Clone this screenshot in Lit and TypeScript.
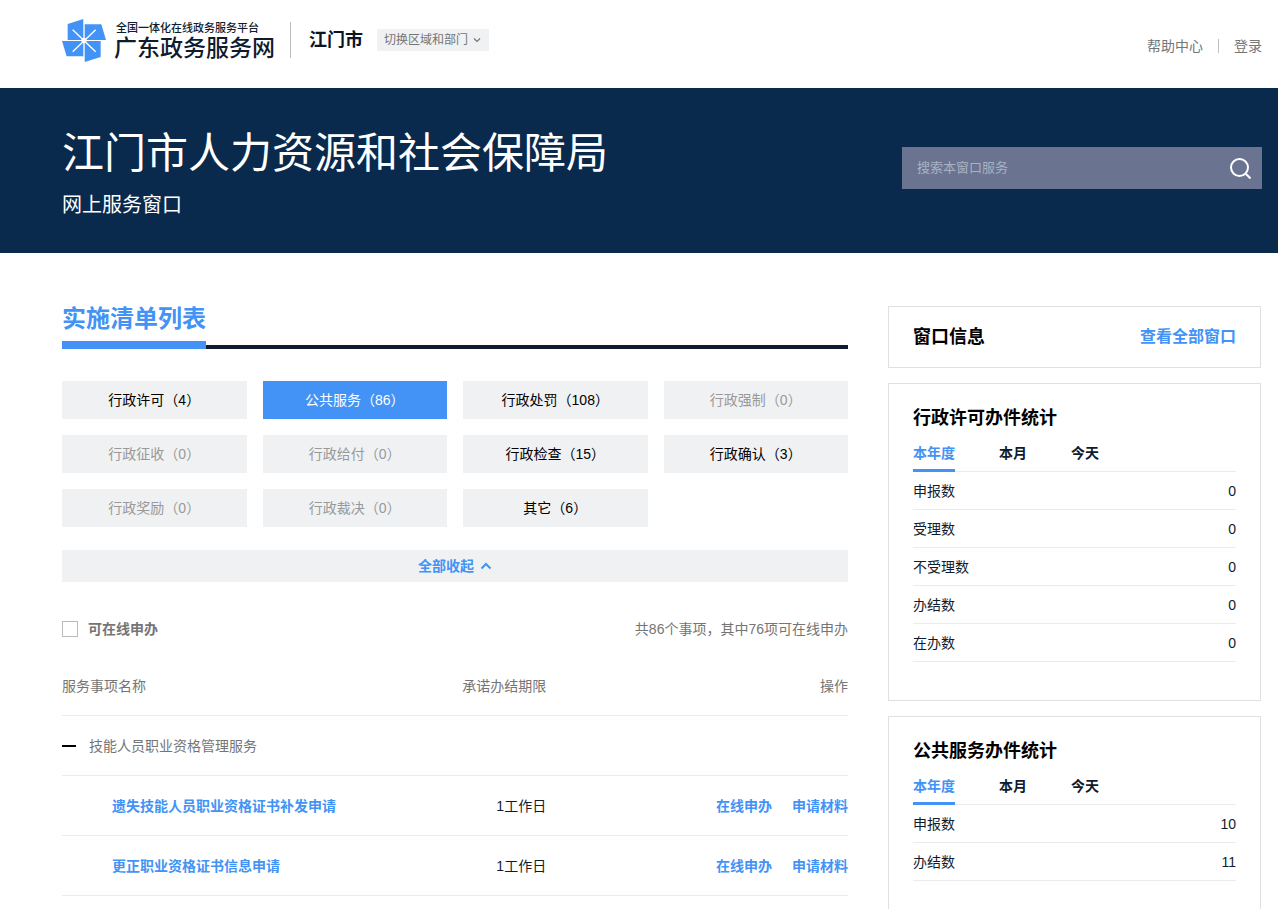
import { LitElement, html, css } from "lit";
import { customElement, property, state } from "lit/decorators.js";
import { classMap } from "lit/directives/class-map.js";

interface Category {
  name: string;
  count: number;
}

interface Service {
  name: string;
  limit: string;
}

interface Stat {
  label: string;
  value: number;
}

const CATEGORIES: Category[] = [
  { name: "行政许可", count: 4 },
  { name: "公共服务", count: 86 },
  { name: "行政处罚", count: 108 },
  { name: "行政强制", count: 0 },
  { name: "行政征收", count: 0 },
  { name: "行政给付", count: 0 },
  { name: "行政检查", count: 15 },
  { name: "行政确认", count: 3 },
  { name: "行政奖励", count: 0 },
  { name: "行政裁决", count: 0 },
  { name: "其它", count: 6 },
];

const SERVICES: Service[] = [
  { name: "遗失技能人员职业资格证书补发申请", limit: "1工作日" },
  { name: "更正职业资格证书信息申请", limit: "1工作日" },
];

const PERMIT_STATS: Stat[] = [
  { label: "申报数", value: 0 },
  { label: "受理数", value: 0 },
  { label: "不受理数", value: 0 },
  { label: "办结数", value: 0 },
  { label: "在办数", value: 0 },
];

const PUBLIC_STATS: Stat[] = [
  { label: "申报数", value: 10 },
  { label: "办结数", value: 11 },
];

const base = css`
  *,
  *::before,
  *::after {
    box-sizing: border-box;
  }
  h1,
  h2,
  h3,
  p {
    margin: 0;
  }
  a {
    color: inherit;
    text-decoration: none;
  }
  button {
    margin: 0;
    padding: 0;
    border: 0;
    background: none;
    color: inherit;
    font: inherit;
    cursor: pointer;
  }
  svg {
    display: block;
    flex: none;
  }
  table {
    width: 100%;
    border-collapse: separate;
    border-spacing: 0;
  }
`;

@customElement("site-header")
export class SiteHeader extends LitElement {
  static styles = [
    base,
    css`
      :host {
        display: flex;
        justify-content: space-between;
        align-items: flex-start;
        padding: 0 16px 8px 62px;
      }
      .left {
        display: flex;
        align-items: center;
        height: 80px;
      }
      .brand {
        display: flex;
        align-items: center;
        gap: 8px;
        color: #0f1c2e;
        font-weight: 500;
        white-space: nowrap;
      }
      .words {
        display: flex;
        flex-direction: column;
      }
      .platform {
        padding-left: 2px;
        font-size: 11px;
        line-height: 16px;
      }
      .site {
        font-size: 23px;
        line-height: 24px;
      }
      .city {
        margin-left: 15px;
        padding-left: 18px;
        border-left: 1px solid #b9bbbf;
        color: #0a1422;
        font-size: 18px;
        font-weight: 700;
        line-height: 36px;
      }
      .switch {
        display: flex;
        align-items: center;
        gap: 5px;
        height: 22px;
        margin-left: 14px;
        padding: 0 8px 0 7px;
        border-radius: 1px;
        background: #f0f1f3;
        color: #757575;
        font-size: 12px;
      }
      .right {
        display: flex;
        align-items: center;
        gap: 15px;
        padding-top: 35px;
        color: #757575;
        line-height: 22px;
      }
      .bar {
        width: 1px;
        height: 14px;
        background: #c0c0c0;
      }
    `,
  ];

  render() {
    return html`
      <div class="left">
        <a class="brand" href="#">
          <svg width="44" height="43" viewBox="18 24 132 129" aria-hidden="true">
            <g fill="#4293f5">
              <path d="M35 39 82 24V87H35Z" />
              <path d="M86 40H136L150 87H86Z" />
              <path d="M18 90H82V136H32Z" />
              <path d="M86 90H134V138L86 153Z" />
            </g>
            <path d="M50 56 119 122M119 56 50 122" stroke="#fff" stroke-width="4" />
            <circle cx="84" cy="88" r="8" fill="#fff" />
          </svg>
          <span class="words">
            <span class="platform">全国一体化在线政务服务平台</span>
            <span class="site">广东政务服务网</span>
          </span>
        </a>
        <span class="city">江门市</span>
        <button class="switch" aria-haspopup="true">
          切换区域和部门
          <svg width="8" height="8" viewBox="0 0 8 8" fill="none" stroke="#757575" stroke-width="1.200" aria-hidden="true">
            <path d="M1 2.500 4 5.500 7 2.500" />
          </svg>
        </button>
      </div>
      <nav class="right">
        <a href="#">帮助中心</a>
        <span class="bar"></span>
        <a href="#">登录</a>
      </nav>
    `;
  }
}

@customElement("dept-banner")
export class DeptBanner extends LitElement {
  static styles = [
    base,
    css`
      :host {
        display: flex;
        justify-content: space-between;
        align-items: flex-start;
        gap: 40px;
        padding: 36px 16px 31px 62px;
        background: #092a4d;
        color: #fff;
      }
      h1 {
        font-size: 42px;
        font-weight: 400;
        line-height: 60px;
      }
      p {
        padding-top: 4px;
        font-size: 20px;
        line-height: 34px;
      }
      .search {
        display: flex;
        width: 360px;
        height: 42px;
        margin-top: 23px;
        background: #6a7490;
      }
      input {
        flex: 1;
        min-width: 0;
        padding: 0 0 0 15px;
        border: 0;
        outline: 0;
        background: none;
        color: #fff;
        font: inherit;
        font-size: 13px;
      }
      input::placeholder {
        color: #a9b1c2;
        opacity: 1;
      }
      .go {
        display: grid;
        place-items: center;
        width: 44px;
      }
    `,
  ];

  render() {
    return html`
      <div>
        <h1>江门市人力资源和社会保障局</h1>
        <p>网上服务窗口</p>
      </div>
      <form class="search" role="search" @submit=${(e: Event) => e.preventDefault()}>
        <input type="text" aria-label="搜索本窗口服务" placeholder="搜索本窗口服务" />
        <button class="go" aria-label="搜索">
          <svg width="22" height="22" viewBox="0 0 22 22" fill="none" stroke="#fff" stroke-width="2" aria-hidden="true">
            <circle cx="10.500" cy="10.500" r="8.500" />
            <path d="M16.500 16.500 21.500 21.500" />
          </svg>
        </button>
      </form>
    `;
  }
}

@customElement("service-list")
export class ServiceList extends LitElement {
  @state() private active = 1;

  static styles = [
    base,
    css`
      :host {
        display: block;
        min-width: 0;
      }
      .heading {
        display: flex;
        border-bottom: 4px solid #0f1c2e;
      }
      h2 {
        margin-bottom: -4px;
        padding-bottom: 3px;
        border-bottom: 8px solid #4293f5;
        color: #4293f5;
        font-size: 24px;
        line-height: 38px;
      }
      .tiles {
        display: grid;
        grid-template-columns: repeat(4, minmax(0, 1fr));
        gap: 16px;
        margin-top: 32px;
      }
      .tile {
        height: 38px;
        background: #f0f1f3;
        color: #000;
      }
      .tile.empty {
        color: #999;
      }
      .tile.active {
        background: #4293f5;
        color: #fff;
      }
      .fold {
        display: flex;
        justify-content: center;
        align-items: center;
        gap: 6px;
        width: 100%;
        height: 32px;
        margin-top: 23px;
        background: #f0f1f3;
        color: #4293f5;
        font-weight: 700;
      }
      .filter {
        display: flex;
        justify-content: space-between;
        margin-top: 36px;
        color: #757575;
        line-height: 22px;
      }
      .check {
        display: flex;
        align-items: center;
        gap: 10px;
        font-weight: 700;
      }
      input {
        appearance: none;
        width: 16px;
        height: 16px;
        margin: 0;
        border: 1px solid #bbb;
        background: #fff;
      }
      input:checked {
        border-color: #4293f5;
        background: #4293f5;
      }
      table {
        margin-top: 16px;
        table-layout: fixed;
      }
      th,
      td {
        height: 60px;
        padding: 0;
        border-bottom: 1px solid #ebebeb;
        text-align: right;
        font-weight: 400;
      }
      th {
        color: #757575;
      }
      .name {
        width: 44%;
        text-align: left;
      }
      .limit {
        width: 17.600%;
      }
      .toggle {
        display: flex;
        align-items: center;
        gap: 13px;
      }
      .minus {
        width: 14px;
        height: 2px;
        background: #000;
      }
      td {
        color: #0f1c2e;
      }
      td a {
        color: #4293f5;
        font-weight: 700;
      }
      td.name {
        padding-left: 50px;
      }
      .ops {
        display: flex;
        justify-content: flex-end;
        gap: 20px;
      }
    `,
  ];

  render() {
    return html`
      <div class="heading"><h2>实施清单列表</h2></div>
      <div class="tiles">
        ${CATEGORIES.map(
          (c, i) => html`<button
            class=${classMap({ tile: true, active: i === this.active, empty: c.count === 0 })}
            @click=${() => (this.active = i)}
          >${c.name}（${c.count}）</button>`,
        )}
      </div>
      <button class="fold">
        全部收起
        <svg width="12" height="8" viewBox="0 0 12 8" fill="none" stroke="#4293f5" stroke-width="2" aria-hidden="true">
          <path d="M1.500 6.500 6 2 10.500 6.500" />
        </svg>
      </button>
      <div class="filter">
        <label class="check"><input type="checkbox" />可在线申办</label>
        <span>共86个事项，其中76项可在线申办</span>
      </div>
      <table>
        <thead>
          <tr>
            <th class="name" scope="col">服务事项名称</th>
            <th class="limit" scope="col">承诺办结期限</th>
            <th scope="col">操作</th>
          </tr>
        </thead>
        <tbody>
          <tr>
            <th colspan="3" scope="rowgroup">
              <button class="toggle" aria-expanded="true">
                <span class="minus"></span>技能人员职业资格管理服务
              </button>
            </th>
          </tr>
          ${SERVICES.map(
            (s) => html`<tr>
              <td class="name"><a href="#">${s.name}</a></td>
              <td>${s.limit}</td>
              <td>
                <div class="ops"><a href="#">在线申办</a><a href="#">申请材料</a></div>
              </td>
            </tr>`,
          )}
        </tbody>
      </table>
    `;
  }
}

@customElement("stat-card")
export class StatCard extends LitElement {
  @property() heading = "";
  @property({ attribute: false }) stats: Stat[] = [];
  @state() private tab = 0;

  static styles = [
    base,
    css`
      :host {
        display: block;
        padding: 20px 24px 38px;
        border: 1px solid #e0e0e0;
      }
      h3 {
        color: #000;
        font-size: 18px;
        line-height: 28px;
      }
      .tabs {
        display: flex;
        gap: 44px;
        border-bottom: 1px solid #ebebeb;
      }
      .tab {
        margin-bottom: -1px;
        padding: 10px 0 5px;
        border-bottom: 3px solid transparent;
        font-weight: 700;
        line-height: 22px;
      }
      .tab.active {
        border-color: #4293f5;
        color: #4293f5;
      }
      th,
      td {
        height: 38px;
        padding: 0;
        border-bottom: 1px solid #ebebeb;
        font-weight: 400;
        text-align: left;
      }
      td {
        text-align: right;
      }
    `,
  ];

  render() {
    return html`
      <h3>${this.heading}</h3>
      <div class="tabs" role="tablist">
        ${["本年度", "本月", "今天"].map(
          (t, i) => html`<button
            role="tab"
            aria-selected=${i === this.tab}
            class=${classMap({ tab: true, active: i === this.tab })}
            @click=${() => (this.tab = i)}
          >${t}</button>`,
        )}
      </div>
      <table>
        <tbody>
          ${this.stats.map((s) => html`<tr><th scope="row">${s.label}</th><td>${s.value}</td></tr>`)}
        </tbody>
      </table>
    `;
  }
}

@customElement("app-root")
export class AppRoot extends LitElement {
  static styles = [
    base,
    css`
      :host {
        display: block;
        min-height: 100vh;
        background: #fff;
        color: #0f1c2e;
        font-family: "Liberation Sans", "Noto Sans CJK SC", sans-serif;
        font-size: 14px;
        line-height: 20px;
      }
      main {
        display: grid;
        grid-template-columns: minmax(0, 1fr) 373px;
        align-items: start;
        gap: 40px;
        padding: 47px 17px 0 62px;
      }
      aside {
        display: flex;
        flex-direction: column;
        gap: 15px;
        padding-top: 6px;
      }
      .info {
        display: flex;
        justify-content: space-between;
        align-items: center;
        padding: 16px 24px;
        border: 1px solid #e0e0e0;
      }
      h3 {
        color: #000;
        font-size: 18px;
        line-height: 28px;
      }
      .all {
        color: #4293f5;
        font-size: 16px;
        font-weight: 700;
      }
    `,
  ];

  render() {
    return html`
      <site-header></site-header>
      <dept-banner></dept-banner>
      <main>
        <service-list></service-list>
        <aside>
          <section class="info">
            <h3>窗口信息</h3>
            <a class="all" href="#">查看全部窗口</a>
          </section>
          <stat-card heading="行政许可办件统计" .stats=${PERMIT_STATS}></stat-card>
          <stat-card heading="公共服务办件统计" .stats=${PUBLIC_STATS}></stat-card>
        </aside>
      </main>
    `;
  }
}
